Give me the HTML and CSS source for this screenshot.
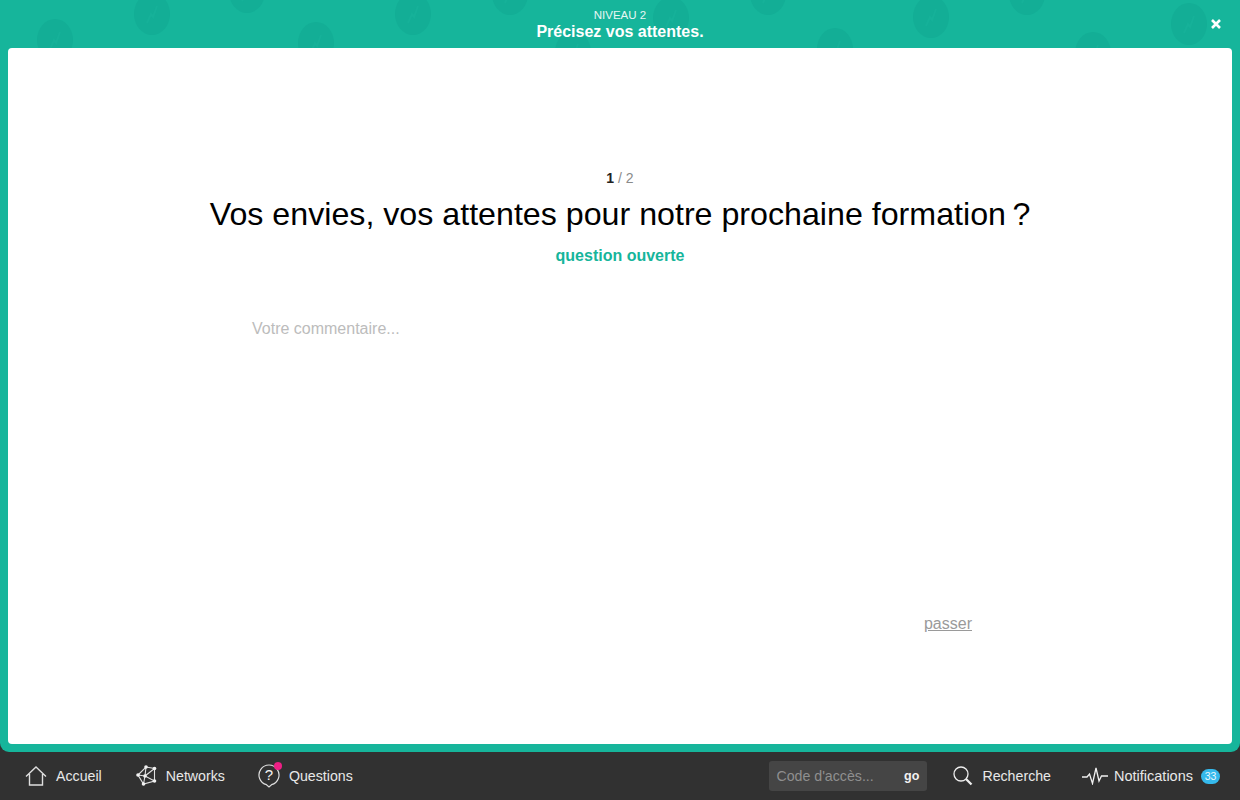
FILE: index.html
```html
<!DOCTYPE html>
<html lang="fr">
<head>
<meta charset="utf-8">
<title>Précisez vos attentes</title>
<link rel="stylesheet" href="styles.css">
</head>
<body>
<div class="app">
  <main class="panel">
    <svg class="pattern" width="1240" height="752" aria-hidden="true">
      <defs>
        <g id="dot">
          <ellipse rx="18" ry="21" fill="#13ae96"/>
          <path d="M-5 9l4-9 2 3 4-11" fill="none" stroke="#16b199" stroke-width="2"/>
        </g>
      </defs>
      <use href="#dot" x="55" y="40"/><use href="#dot" x="152" y="14"/><use href="#dot" x="247" y="-8"/>
      <use href="#dot" x="316" y="43"/><use href="#dot" x="413" y="14"/><use href="#dot" x="510" y="-6"/>
      <use href="#dot" x="573" y="52"/><use href="#dot" x="671" y="18"/><use href="#dot" x="768" y="-6"/>
      <use href="#dot" x="835" y="49"/><use href="#dot" x="931" y="17"/><use href="#dot" x="1027" y="-6"/>
      <use href="#dot" x="1093" y="53"/><use href="#dot" x="1189" y="24"/>
    </svg>
    <header class="head">
      <div class="level">NIVEAU 2</div>
      <div class="head-title">Précisez vos attentes.</div>
      <button class="close" aria-label="Fermer">
        <svg width="12" height="12" viewBox="0 0 12 12"><path d="M2 2l8 8M10 2l-8 8" stroke="#fff" stroke-width="2.6"/></svg>
      </button>
    </header>
    <section class="card">
      <div class="count"><b>1</b> / 2</div>
      <h1 class="question">Vos envies, vos attentes pour notre prochaine formation&#8201;?</h1>
      <div class="kind">question ouverte</div>
      <div class="form">
        <div class="comment">Votre commentaire...</div>
        <a class="skip" href="#">passer</a>
      </div>
    </section>
  </main>
  <nav class="nav">
    <a class="item home" href="#">
      <svg class="ic" width="22" height="20" viewBox="0 0 22 20" fill="none" stroke="#dedede" stroke-width="1.4"><path d="M1 10.500L11 1l10 9.500M4.500 8v11h13V8"/></svg>
      <span>Accueil</span>
    </a>
    <a class="item networks" href="#">
      <svg class="ic" width="22" height="22" viewBox="0 0 22 22" fill="none" stroke="#e0e0e0" stroke-width="1.1"><path d="M2 10L10 2l8.500 1.500L18.500 16 7.500 19zM10 2L9 11l9.500 5M9 11L2 10M9 11L18.500 3.500M9 11L7.500 19"/><g fill="#f2f2f2" stroke="none"><circle cx="2" cy="10" r="1.800"/><circle cx="10" cy="2" r="1.800"/><circle cx="18.500" cy="3.500" r="1.800"/><circle cx="18.500" cy="16" r="1.800"/><circle cx="7.500" cy="19" r="1.800"/><circle cx="9" cy="11" r="1.800"/></g></svg>
      <span>Networks</span>
    </a>
    <a class="item questions" href="#">
      <span class="q-icon">
        <svg width="22" height="24" viewBox="0 0 22 24" fill="none" stroke="#dedede" stroke-width="1.200"><path d="M8.500 20.700A10 10 0 1 1 13.500 20.700L11 23z"/></svg>
        <span class="q-mark">?</span>
        <span class="dot"></span>
      </span>
      <span>Questions</span>
    </a>
    <div class="spacer"></div>
    <div class="code"><span class="code-ph">Code d'accès...</span><b class="go">go</b></div>
    <a class="item search" href="#">
      <svg class="ic" width="20" height="20" viewBox="0 0 20 20" fill="none" stroke="#eee"><circle cx="8" cy="8" r="7" stroke-width="1.300"/><path d="M13 13l5.500 5.500" stroke-width="2.300"/></svg>
      <span>Recherche</span>
    </a>
    <a class="item notif" href="#">
      <svg width="26" height="18" viewBox="0 0 26 18" fill="none" stroke="#f0f0f0" stroke-width="1.300"><path d="M0 10h5l2.500-3 3 9.500L14 1l3 13 2.500-5H26"/></svg>
      <span class="notif-label">Notifications</span>
      <span class="badge">33</span>
    </a>
  </nav>
</div>
</body>
</html>
```
FILE: styles.css
```css
* { box-sizing: border-box; }
html, body { margin: 0; height: 100%; overflow: hidden; }
body { background: #313131; font-family: "Liberation Sans", Arial, sans-serif; }
a { text-decoration: none; color: inherit; }

.app { width: 1240px; height: 800px; display: flex; flex-direction: column; }

.panel {
  position: relative;
  height: 752px;
  display: flex;
  flex-direction: column;
  background: #16b59b;
  border-radius: 0 0 9px 9px;
  overflow: hidden;
}
.pattern { position: absolute; left: 0; top: 0; }

.head {
  position: relative;
  height: 48px;
  flex: none;
  color: #fff;
  text-align: center;
  padding-top: 8px;
}
.level { font-size: 11.500px; line-height: 14px; color: #e6f7f4; }
.head-title { font-size: 16px; line-height: 19px; font-weight: 700; }
.close {
  position: absolute;
  right: 18px;
  top: 18px;
  width: 12px;
  height: 12px;
  padding: 0;
  border: 0;
  background: none;
  display: flex;
}

.card {
  position: relative;
  flex: 1;
  margin: 0 8px 8px;
  background: #fff;
  border-radius: 4px;
  padding-top: 122px;
  text-align: center;
}
.count { font-size: 14px; line-height: 16px; color: #8a8a8a; }
.count b { color: #222; }
.question {
  margin: 9px 0 0;
  font-size: 32.200px;
  line-height: 38px;
  font-weight: 400;
  color: #000;
}
.kind {
  margin-top: 13px;
  font-size: 16px;
  line-height: 20px;
  font-weight: 700;
  color: #16b59b;
}
.form {
  width: 720px;
  margin: 53px auto 0 244px;
  text-align: left;
  display: flex;
  flex-direction: column;
}
.comment { font-size: 16px; line-height: 20px; color: #bcbcbc; }
.skip {
  align-self: flex-end;
  margin-top: 275px;
  font-size: 16px;
  line-height: 20px;
  color: #9a9a9a;
  text-decoration: underline;
}

.nav {
  flex: 1;
  display: flex;
  align-items: center;
  padding: 0 20px 0 25px;
  font-size: 14.200px;
  color: #e8e8e8;
}
.item { display: flex; align-items: center; }
.ic { flex: none; }
.home span { margin-left: 9px; }
.networks { margin-left: 34px; }
.networks span { margin-left: 8px; }
.questions { margin-left: 33px; }
.questions > span:last-child { margin-left: 9px; }
.q-icon { position: relative; width: 22px; height: 24px; display: block; }
.q-icon svg { display: block; }
.q-mark {
  position: absolute;
  left: 0;
  top: 3px;
  width: 22px;
  text-align: center;
  font-size: 15px;
  line-height: 16px;
  color: #f4f4f4;
}
.dot {
  position: absolute;
  right: -2px;
  top: -2px;
  width: 8px;
  height: 8px;
  border-radius: 50%;
  background: #ee1f85;
}
.spacer { flex: 1; }
.code {
  width: 158px;
  height: 30px;
  display: flex;
  align-items: center;
  justify-content: space-between;
  padding: 0 8px 0 7px;
  background: #454545;
  border-radius: 3px;
}
.code-ph { color: #8f8f8f; }
.go { font-size: 12.500px; color: #f2f2f2; }
.search { margin-left: 26px; }
.search span { margin-left: 9px; }
.notif { margin-left: 31px; }
.notif-label { margin-left: 6px; font-size: 14.500px; }
.badge {
  margin-left: 8px;
  width: 19px;
  height: 15px;
  border-radius: 8px;
  background: #35b9ec;
  color: #e9f8fd;
  font-size: 10.500px;
  line-height: 15px;
  text-align: center;
}
```
